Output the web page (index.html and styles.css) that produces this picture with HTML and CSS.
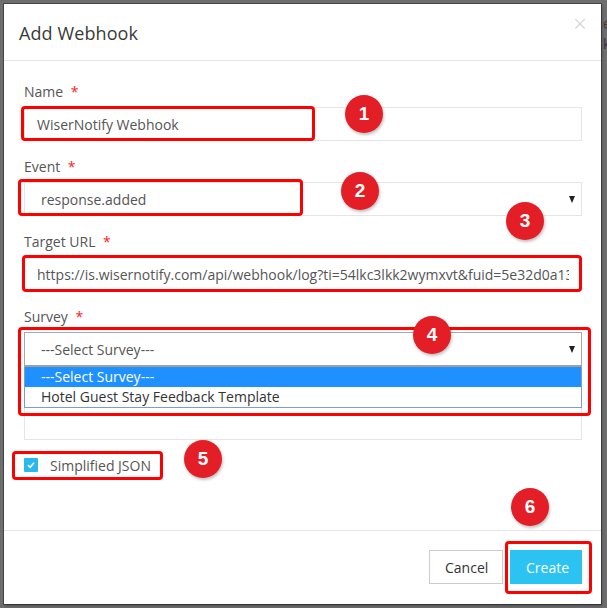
FILE: index.html
```html
<!DOCTYPE html>
<html>
<head>
<meta charset="utf-8">
<link rel="stylesheet" href="styles.css">
</head>
<body>
<div class="page">
  <div class="backdrop-text"><span class="bt1">e</span><span class="bt2">k</span></div>
  <div class="modal">
    <div class="modal-header">
      <h4 class="modal-title">Add Webhook</h4>
      <span class="close">&times;</span>
    </div>
    <div class="modal-body">
      <div class="form-group">
        <label class="label">Name <span class="req">*</span></label>
        <div class="input">WiserNotify Webhook</div>
      </div>
      <div class="form-group">
        <label class="label">Event <span class="req">*</span></label>
        <div class="input select"><span>response.added</span><span class="caret"></span></div>
      </div>
      <div class="form-group">
        <label class="label">Target URL <span class="req">*</span></label>
        <div class="input url"><span class="url-text">https://is.wisernotify.com/api/webhook/log?ti=54lkc3lkk2wymxvt&amp;fuid=5e32d0a13a</span></div>
      </div>
      <div class="form-group">
        <label class="label">Survey <span class="req">*</span></label>
        <div class="survey-wrap">
          <div class="input select survey-select"><span>---Select Survey---</span><span class="caret"></span></div>
          <ul class="dropdown">
            <li class="active">---Select Survey---</li>
            <li>Hotel Guest Stay Feedback Template</li>
          </ul>
        </div>
      </div>
      <div class="check-row">
        <span class="checkbox"><svg width="10" height="10" viewBox="0 0 10 10"><path d="M2 5.2 L4.2 7.3 L8 2.8" fill="none" stroke="#fff" stroke-width="1.6"/></svg></span>
        <span class="check-label">Simplified JSON</span>
      </div>
    </div>
    <div class="modal-footer">
      <button class="btn btn-default">Cancel</button>
      <button class="btn btn-primary">Create</button>
    </div>
  </div>

  <div class="mark m1"></div>
  <div class="mark m2"></div>
  <div class="mark m3"></div>
  <div class="mark m4"></div>
  <div class="mark m5"></div>
  <div class="mark m6"></div>

  <div class="badge b1">1</div>
  <div class="badge b2">2</div>
  <div class="badge b3">3</div>
  <div class="badge b4">4</div>
  <div class="badge b5">5</div>
  <div class="badge b6">6</div>
</div>
</body>
</html>
```

FILE: styles.css
```css
* { box-sizing: border-box; }
html, body { margin: 0; padding: 0; }
body {
  background: #6e6e6e;
  font-family: "Open Sans", "DejaVu Sans", sans-serif;
  overflow: hidden;
  width: 607px;
  height: 608px;
}
.page {
  position: relative;
  width: 607px;
  height: 608px;
  padding: 4px 0 0 4px;
}
.backdrop-text {
  position: absolute;
  left: 603px;
  top: 14px;
  font-size: 14px;
  line-height: 20px;
  color: #4a3a2a;
  display: flex;
  flex-direction: column;
}
.bt2 { color: #3a2a4a; }
.modal {
  width: 597px;
  height: 600px;
  background: #fff;
  box-shadow: 0 0 0 1px rgba(0,0,0,0.35), 1px 2px 3px rgba(0,0,0,0.3);
  display: flex;
  flex-direction: column;
  position: relative;
}
.modal-header {
  height: 57px;
  border-bottom: 1px solid #e5e5e5;
  padding: 0 15px;
  display: flex;
  align-items: center;
  justify-content: space-between;
  flex: none;
}
.modal-title {
  margin: 0;
  font-weight: 400;
  font-size: 18px;
  color: #3a3a3a;
  letter-spacing: 0.1px;
  padding-top: 1px;
}
.close {
  font-family: "DejaVu Sans", sans-serif;
  font-weight: 200;
  font-size: 19px;
  color: #cfcfcf;
  margin-right: -2px;
  margin-top: -18px;
}
.modal-body {
  flex: 1;
  padding: 21px 19px 0 20px;
}
.form-group { margin-bottom: 16px; }
.label {
  display: block;
  font-size: 14px;
  line-height: 20px;
  color: #555;
  margin-bottom: 5px;
}
.req { color: #ff2020; margin-left: 4px; }
.input {
  height: 34px;
  border: 1px solid #e5e5e5;
  font-size: 14px;
  color: #555;
  padding: 0 12px;
  display: flex;
  align-items: center;
  justify-content: space-between;
  overflow: hidden;
  white-space: nowrap;
}
.select { padding-left: 16px; padding-right: 6px; }
.caret {
  width: 0; height: 0;
  border-left: 3.5px solid transparent;
  border-right: 3.5px solid transparent;
  border-top: 7px solid #222;
}
.url { padding-right: 0; }
.url-text { flex: none; width: 532px; overflow: hidden; }
.survey-wrap {
  height: 108px;
  border: 1px solid #e5e5e5;
  margin-bottom: 0;
}
.survey-select {
  margin: -1px -1px 0 -1px;
  border: 1px solid #a8a8a8;
  border-bottom: 2px solid #a0a0a0;
  height: 35px;
}
.dropdown {
  list-style: none;
  margin: 0 -1px;
  padding: 0;
  border: 1px solid #7a9ed0;
  border-top: none;
  background: #fff;
}
.dropdown li {
  height: 20px;
  line-height: 20px;
  font-size: 14px;
  color: #333;
  padding-left: 16px;
}
.dropdown li.active { background: #1e90ff; color: #fff; }
.check-row {
  display: flex;
  align-items: center;
  margin-top: 17px;
  height: 16px;
}
.checkbox {
  width: 14px;
  height: 14px;
  background: #29b9ef;
  display: flex;
  align-items: center;
  justify-content: center;
  border-radius: 1px;
}
.check-label {
  font-size: 14px;
  color: #555;
  margin-left: 12px;
}
.modal-footer {
  flex: none;
  height: 74px;
  border-top: 1px solid #e5e5e5;
  padding: 19px 19px 0 0;
  display: flex;
  justify-content: flex-end;
  align-items: flex-start;
  gap: 7px;
}
.btn {
  font-family: "Open Sans", "DejaVu Sans", sans-serif;
  font-size: 14px;
  height: 34px;
  padding: 0 15px;
  border-radius: 0;
  cursor: pointer;
}
.btn-default { background: #fff; border: 1px solid #ccc; color: #333; width: 74px; }
.btn-primary { background: #2cc3f2; border: 1px solid #2cc3f2; color: #fff; width: 72px; }

.mark {
  position: absolute;
  border: 3px solid #ff0000;
  border-radius: 4px;
}
.m1 { left: 21px; top: 106px; width: 294px; height: 35px; }
.m2 { left: 18px; top: 179px; width: 285px; height: 37px; }
.m3 { left: 22px; top: 255px; width: 560px; height: 37px; }
.m4 { left: 18px; top: 327px; width: 573px; height: 89px; }
.m5 { left: 12px; top: 451px; width: 151px; height: 29px; }
.m6 { left: 505px; top: 541px; width: 87px; height: 53px; }

.badge {
  position: absolute;
  width: 38px;
  height: 38px;
  margin: -19px 0 0 -19px;
  border-radius: 50%;
  background: #e41e26;
  color: #fff;
  font-family: "Liberation Sans", Arial, sans-serif;
  font-weight: 700;
  font-size: 19px;
  display: flex;
  align-items: center;
  justify-content: center;
  box-shadow: 1px 2px 3px rgba(0,0,0,0.25);
}
.b1 { left: 364px; top: 114px; }
.b2 { left: 360px; top: 191px; }
.b3 { left: 525px; top: 221px; }
.b4 { left: 432px; top: 335px; }
.b5 { left: 203px; top: 459px; }
.b6 { left: 530px; top: 507px; }
```
